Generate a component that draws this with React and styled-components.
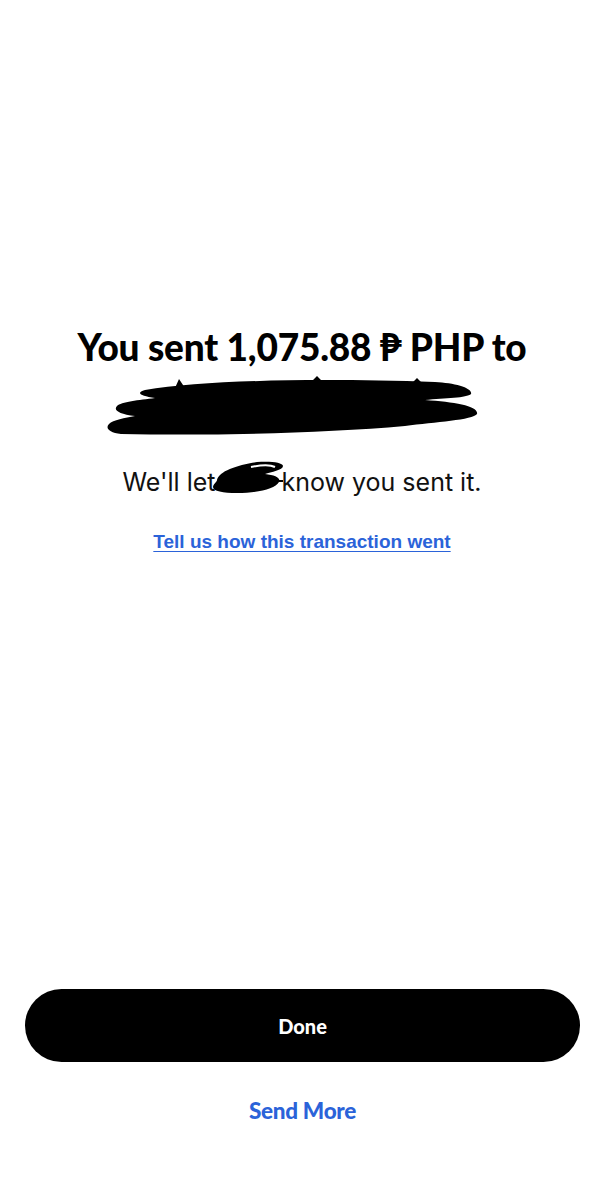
import React from 'react'
import styled, { createGlobalStyle } from 'styled-components'

const GlobalStyle = createGlobalStyle`
  html, body {
    margin: 0;
    padding: 0;
    background: #ffffff;
  }
  * { box-sizing: border-box; }
`

const Page = styled.div`
  width: 604px;
  min-height: 1200px;
  display: flex;
  flex-direction: column;
  align-items: center;
  background: #fff;
`
const Main = styled.div`
  padding-top: 324px;
  display: flex;
  flex-direction: column;
  align-items: center;
  width: 100%;
`
const Title = styled.h1`
  margin: 0;
  font-family: Lato, "Noto Sans", sans-serif;
  font-weight: 900;
  font-size: 37px;
  line-height: 46px;
  letter-spacing: -0.2px;
  color: #000;
  text-align: center;
`
const NameBlot = styled.svg`
  display: block;
  margin: 6px 16px 0 0;
  width: 378px;
  height: 62px;
`
const Message = styled.p`
  margin: 28px 0 0;
  font-family: Inter, "Noto Sans", sans-serif;
  font-size: 25px;
  line-height: 30px;
  color: #111;
  display: flex;
  align-items: center;
`
const InlineBlot = styled.svg`
  width: 80px;
  height: 40px;
  margin: -8px -6px 0 -8px;
`
const FeedbackLink = styled.a`
  margin-top: 33px;
  font-family: "Liberation Sans", Arial, sans-serif;
  font-weight: 700;
  font-size: 19px;
  color: #2b63d9;
  text-decoration: underline;
  text-underline-offset: 3px;
  cursor: pointer;
`
const Footer = styled.div`
  margin-top: auto;
  width: 100%;
  padding: 0 24px 76px 25px;
  display: flex;
  flex-direction: column;
  align-items: center;
`
const PrimaryButton = styled.button`
  width: 100%;
  height: 73px;
  border: none;
  border-radius: 37px;
  background: #000;
  color: #fff;
  font-family: Lato, "Noto Sans", sans-serif;
  font-weight: 900;
  font-size: 20px;
  cursor: pointer;
`
const TextButton = styled.button`
  margin-top: 35px;
  border: none;
  background: none;
  padding: 0;
  color: #2b63d9;
  font-family: Lato, "Noto Sans", sans-serif;
  font-weight: 900;
  font-size: 22.5px;
  letter-spacing: -0.3px;
  cursor: pointer;
`

function App() {
  return (
    <Page>
      <GlobalStyle />
      <Main>
        <Title>You sent 1,075.88 ₱ PHP to</Title>
        <NameBlot viewBox="0 0 378 62">
          <path d="M40 14 C100 4 210 2 330 6 C350 7 368 12 366 18 C362 22 340 22 320 24 C350 26 374 30 372 38 C368 44 330 46 300 50 C220 57 110 60 16 58 C4 57 0 52 4 48 C8 44 20 42 30 40 C14 38 8 34 12 30 C16 26 34 24 50 22 C36 20 30 17 40 14 Z" fill="#000" />
          <path d="M70 12 L74 3 L80 12 Z M206 6 L212 0 L218 6 Z M306 8 L312 2 L318 8 Z" fill="#000" />
        </NameBlot>
        <Message>
          We'll let
          <InlineBlot viewBox="0 0 80 40">
            <path d="M10 22 C12 13 30 7 50 4 C62 3 76 4 76 8 C76 12 64 14 58 16 C68 17 74 20 72 24 C68 31 50 35 30 35 C16 35 6 33 6 29 C6 26 10 24 10 22 Z" fill="#000" />
            <path d="M44 9 C54 7 64 7 68 9" stroke="#fff" strokeWidth="2" fill="none" />
            <path d="M58 23 L76 23" stroke="#000" strokeWidth="2" />
          </InlineBlot>
          know you sent it.
        </Message>
        <FeedbackLink>Tell us how this transaction went</FeedbackLink>
      </Main>
      <Footer>
        <PrimaryButton>Done</PrimaryButton>
        <TextButton>Send More</TextButton>
      </Footer>
    </Page>
  )
}

export default App
